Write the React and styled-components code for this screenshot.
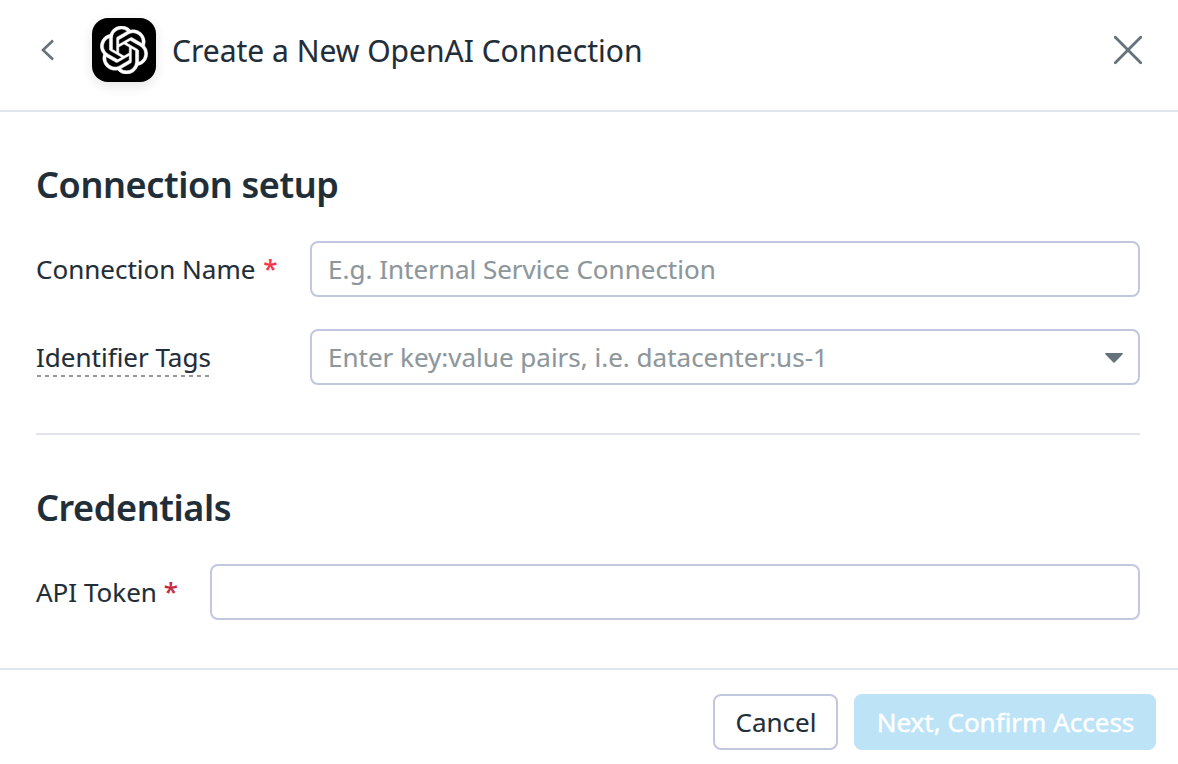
import React from "react";
import styled, { createGlobalStyle } from "styled-components";
import { SiOpenai } from "react-icons/si";

const GlobalStyle = createGlobalStyle`
  * { box-sizing: border-box; }
  body {
    margin: 0;
    background: #fff;
    color: #1f2e38;
    font-family: "Noto Sans", sans-serif;
    font-size: 26px;
    -webkit-font-smoothing: antialiased;
    -webkit-text-stroke: 0.12px;
  }
`;

const Dialog = styled.div`
  display: flex;
  flex-direction: column;
  width: 1178px;
  height: 764px;
  background: #fff;
`;

const Header = styled.header`
  display: flex;
  align-items: flex-start;
  height: 112px;
  padding: 18px 34px 0 36px;
  border-bottom: 2px solid #e0e4ee;
`;

const IconButton = styled.button`
  display: flex;
  align-items: center;
  justify-content: center;
  width: ${(p) => p.$width}px;
  height: 64px;
  padding: 0;
  border: 0;
  background: none;
  color: #66727b;
`;

const AppLogo = styled.div`
  display: flex;
  align-items: center;
  justify-content: center;
  width: 64px;
  height: 64px;
  margin: 0 16px 0 32px;
  border-radius: 16px;
  background: #000;
  color: #fff;
  box-shadow: 0 4px 12px rgba(0, 0, 0, 0.1);

  path {
    stroke: #fff;
    stroke-width: 0.25;
  }
`;

const Title = styled.h1`
  flex: 1;
  margin: 0;
  font-size: 30px;
  font-weight: 400;
  line-height: 66px;
  white-space: nowrap;
`;

const Content = styled.main`
  flex: 1;
  padding: 0 38px 0 36px;
`;

const Section = styled.section`
  padding: ${(p) => p.$top}px 0 48px;
  border-bottom: ${(p) => (p.$divided ? "2px solid #e0e4ee" : "0")};
`;

const Heading = styled.h2`
  margin: 0 0 31px;
  font-size: 36px;
  font-weight: 600;
  letter-spacing: -0.38px;
  line-height: 50px;
`;

const Field = styled.div`
  display: flex;
  align-items: center;
  & + & { margin-top: 32px; }
`;

const Label = styled.label`
  width: ${(p) => p.$width}px;
  line-height: 36px;
  white-space: nowrap;
`;

const Hint = styled.span`
  display: inline-block;
  height: 40px;
  padding-top: 2px;
  line-height: 36px;
  vertical-align: top;
  background: repeating-linear-gradient(90deg, #979797 0 4px, transparent 4px 8px) 1px 100% / 100% 2px no-repeat;
`;

const Required = styled.span`
  margin-left: ${(p) => p.$gap || 0}px;
  color: ${(p) => p.$color};
  font-weight: 500;
  vertical-align: 1px;
  line-height: 1;
`;

const Control = styled.div`
  display: flex;
  flex: 1;
  align-items: center;
  height: 56px;
  padding: 0 15px 0 16px;
  border: 2px solid #c0c7df;
  border-radius: 8px;
`;

const Input = styled.input`
  flex: 1;
  min-width: 0;
  height: 50px;
  padding: 0;
  border: 0;
  outline: 0;
  background: none;
  color: inherit;
  font: inherit;
  &::placeholder { color: #8d979b; opacity: 1; }
`;

const Caret = styled.svg`
  margin-top: 2px;
`;

const Footer = styled.footer`
  display: flex;
  justify-content: flex-end;
  gap: 16px;
  height: 96px;
  padding: 24px 22px 0 0;
  border-top: 2px solid #e0e4ee;
`;

const Button = styled.button`
  width: ${(p) => p.$width}px;
  height: 56px;
  padding: 0 0 0 1px;
  border: 2px solid ${(p) => (p.$primary ? "#bde3f7" : "#c0c7df")};
  border-radius: 8px;
  background: ${(p) => (p.$primary ? "#bde3f7" : "#fff")};
  color: ${(p) => (p.$primary ? "#fff" : "#1f2e38")};
  font: inherit;
  line-height: 50px;
  white-space: nowrap;
  -webkit-text-stroke: ${(p) => (p.$primary ? "0.4px" : "0.12px")};
`;

export default function App() {
  return (
    <Dialog>
      <GlobalStyle />
      <Header>
        <IconButton $width={24} aria-label="Back">
          <svg width="24" height="24" viewBox="0 0 24 24" fill="none" stroke="currentColor" strokeWidth="2.6">
            <path d="M17 2.5 7 12l10 9.5" />
          </svg>
        </IconButton>
        <AppLogo>
          <SiOpenai size={48} />
        </AppLogo>
        <Title>Create a New OpenAI Connection</Title>
        <IconButton $width={32} aria-label="Close">
          <svg width="32" height="32" viewBox="0 0 32 32" fill="none" stroke="currentColor" strokeWidth="2.8" strokeLinecap="round">
            <path d="M3.3 3.3 28.7 28.7M28.7 3.3 3.3 28.7" />
          </svg>
        </IconButton>
      </Header>
      <Content>
        <Section $top={48} $divided>
          <Heading>Connection setup</Heading>
          <Field>
            <Label $width={274} htmlFor="name">
              Connection Name <Required $gap={1} $color="#f4364c">*</Required>
            </Label>
            <Control>
              <Input id="name" placeholder="E.g. Internal Service Connection" />
            </Control>
          </Field>
          <Field>
            <Label $width={274} htmlFor="tags">
              <Hint>Identifier Tags</Hint>
            </Label>
            <Control>
              <Input id="tags" placeholder="Enter key:value pairs, i.e. datacenter:us-1" />
              <Caret width="18" height="10" viewBox="0 0 18 10" fill="#66727b">
                <path d="M.8 0h16.4c.7 0 1 .8.5 1.3L9.6 9.6a.9.9 0 0 1-1.2 0L.3 1.3C-.2.8.1 0 .8 0Z" />
              </Caret>
            </Control>
          </Field>
        </Section>
        <Section $top={48}>
          <Heading>Credentials</Heading>
          <Field>
            <Label $width={174} htmlFor="token">
              API Token <Required $color="#c52a3e">*</Required>
            </Label>
            <Control>
              <Input id="token" />
            </Control>
          </Field>
        </Section>
      </Content>
      <Footer>
        <Button $width={125}>Cancel</Button>
        <Button $width={302} $primary>Next, Confirm Access</Button>
      </Footer>
    </Dialog>
  );
}
